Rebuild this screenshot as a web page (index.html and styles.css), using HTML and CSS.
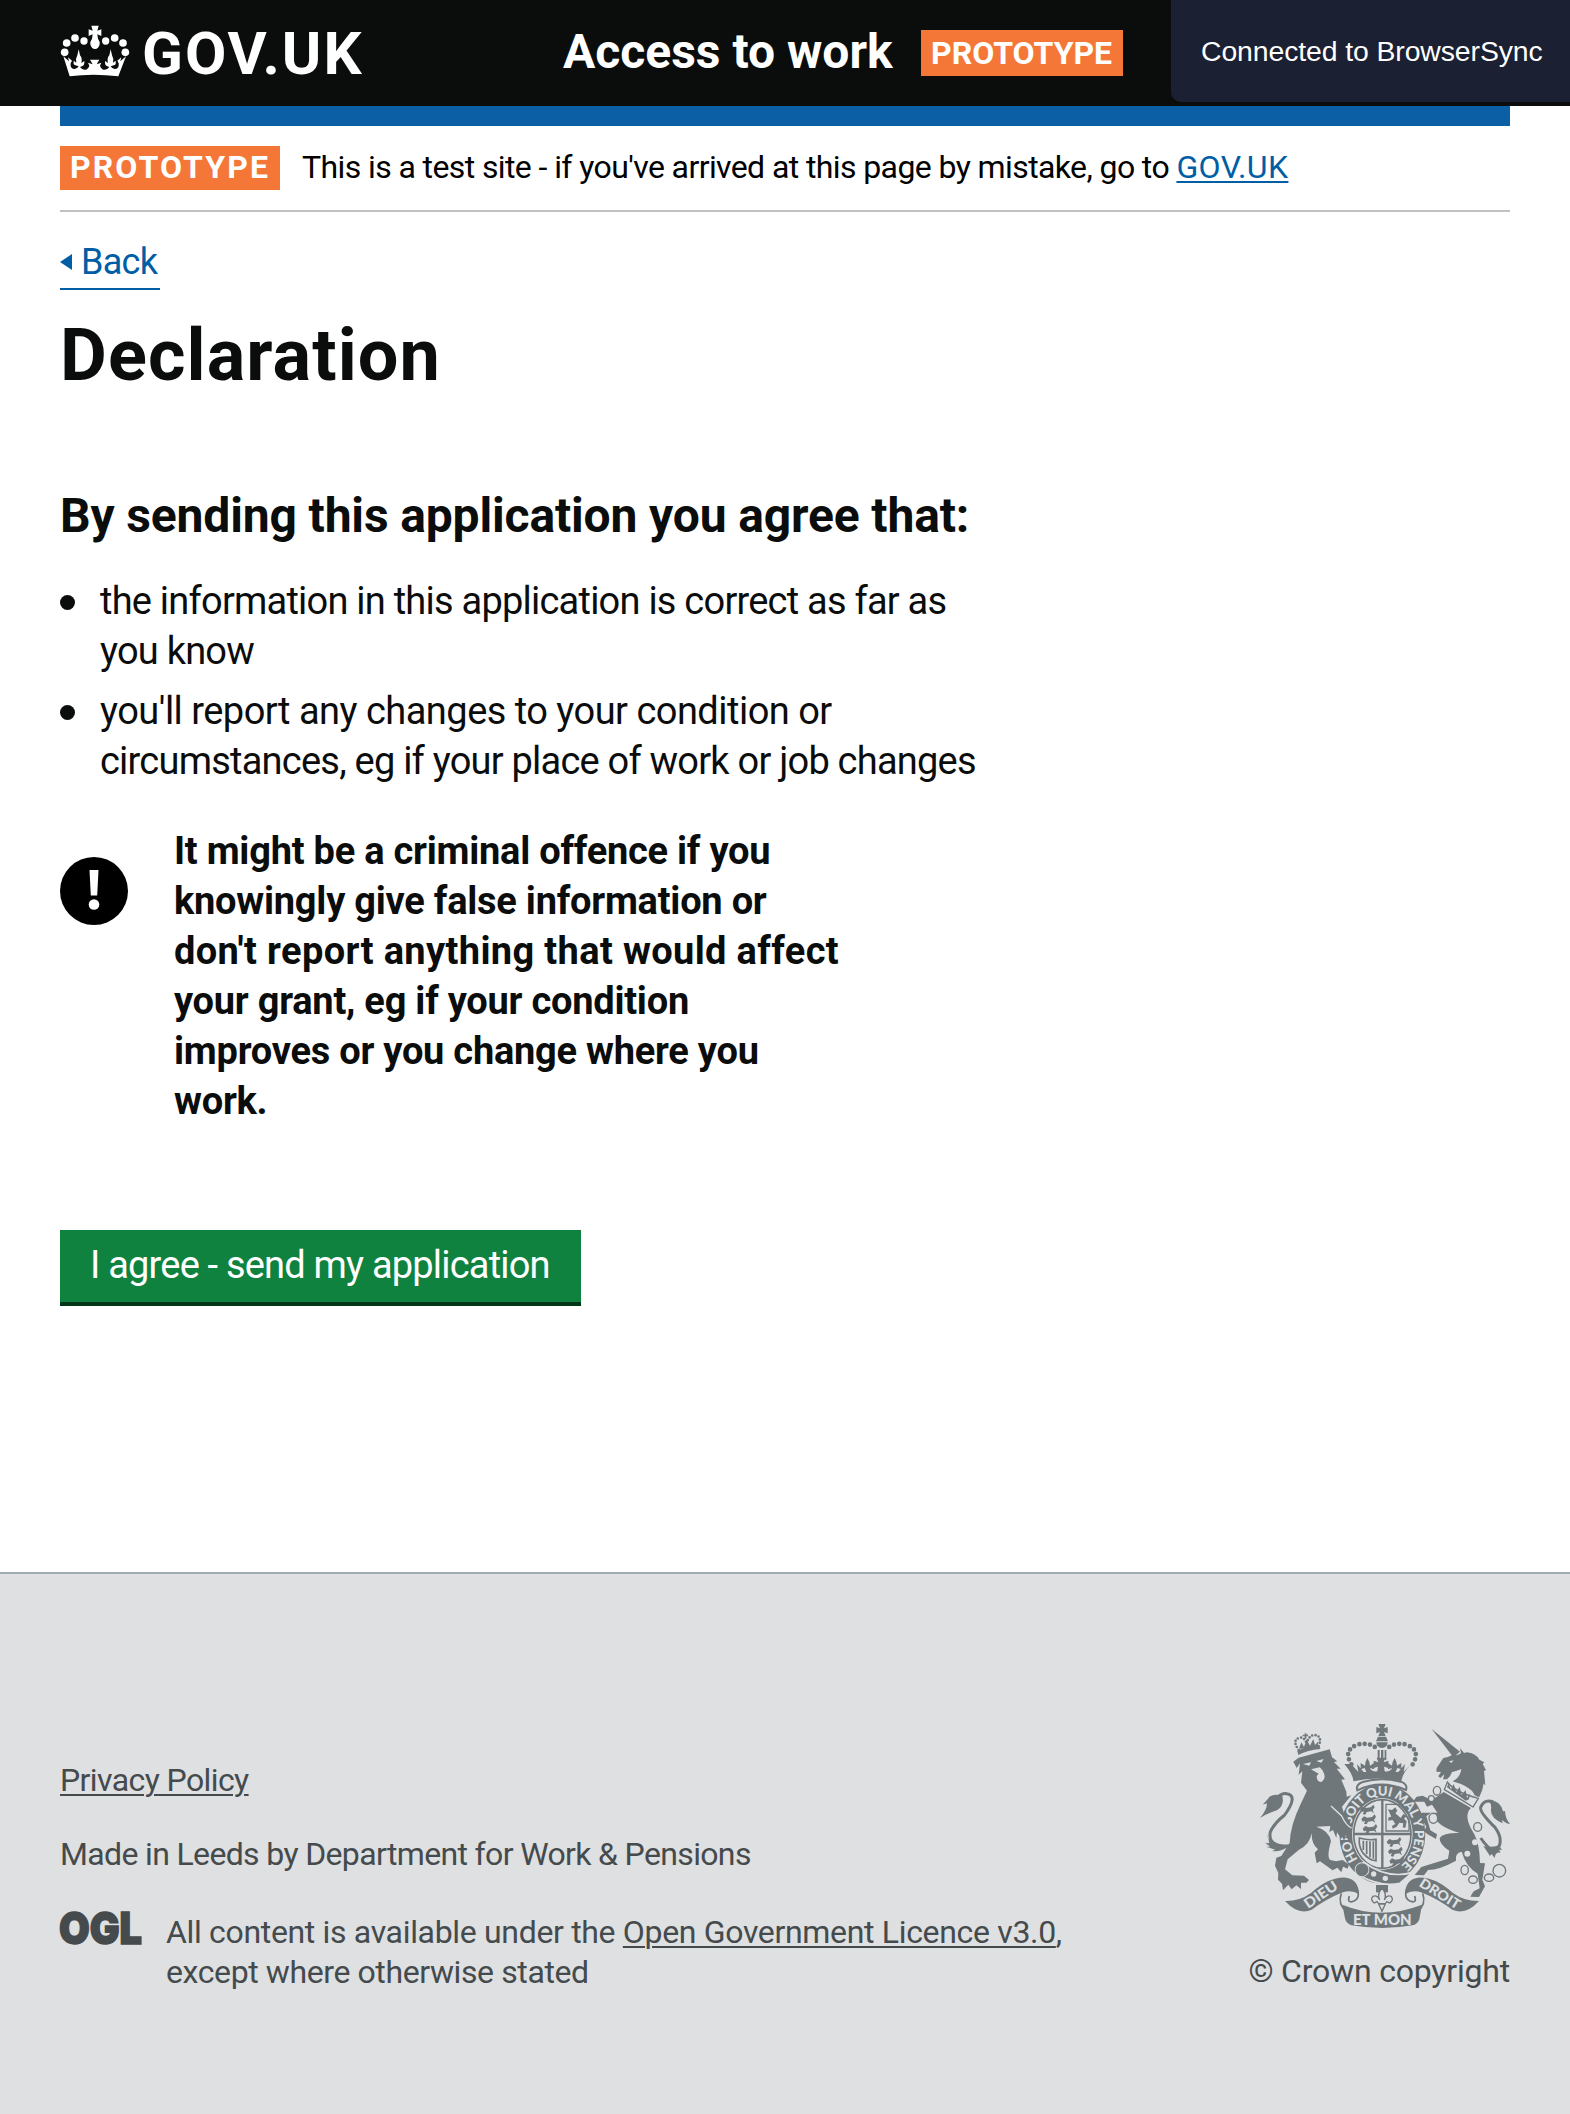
FILE: index.html
```html
<!DOCTYPE html>
<html lang="en">
<head>
<meta charset="utf-8">
<title>Declaration - Access to work</title>
<link rel="stylesheet" href="styles.css">
</head>
<body>
<header class="header">
  <div class="brand">
    <svg class="crown" viewBox="60 76 210 156" aria-hidden="true">
      <g fill="#fff">
        <circle cx="74" cy="158" r="11.5"/><circle cx="80" cy="130" r="11.5"/><circle cx="105" cy="115" r="11.5"/><circle cx="132" cy="124" r="11"/>
        <circle cx="197" cy="124" r="11"/><circle cx="224" cy="115" r="11.5"/><circle cx="249" cy="130" r="11.5"/><circle cx="256" cy="158" r="11.5"/>
        <path d="M154 78h22l-4 15 12-4v20l-12-5 2 13q6 8 5 17-3 14-14 14t-14-14q-1-9 5-17l2-13-12 5V89l12 4z"/>
        <path d="M70 170l17 15-3-12 12 10-4 8q-2 16 10 17 9 1 14-8l-12-4q-5-3-3-13l8 6q-3-12 3-22l4-18 4 18q8 9 4 23l9-6q1 12-5 15l-8 3q6 9 16 8 8-1 12-12l-4-9 14 5-8-14h28l-8 14 14-5-4 9q4 11 12 12 10 1 16-8l-8-3q-6-3-5-15l9 6q-4-14 4-23l4-18 4 18q6 10 3 22l8-6q2 10-3 13l-12 4q5 9 14 8 12-1 10-17l-4-8 12-10-3 12 17-15-23 60q-75-9-146 0z"/>
      </g>
    </svg>
    <span class="brand-name">GOV.UK</span>
  </div>
  <span class="service">Access to work</span>
  <span class="tag tag-header">PROTOTYPE</span>
  <div class="sync">Connected to BrowserSync</div>
</header>
<div class="page">
  <div class="bar"></div>
  <div class="phase"><span class="tag tag-phase">PROTOTYPE</span><span class="phase-text"><span class="phase-lead">This is a test site - if you've arrived at this page by mistake, go to </span><a href="#">GOV.UK</a></span></div>
  <a class="back" href="#"><span class="arrow"></span>Back</a>
  <main>
    <h1>Declaration</h1>
    <h2>By sending this application you agree that:</h2>
    <ul class="list">
      <li><span>the information in this application is correct as far as<br>you know</span></li>
      <li><span><span class="open">you'll report any changes to your condition or</span><br>circumstances, eg if your place of work or job changes</span></li>
    </ul>
    <div class="warning">
      <svg class="warning-icon" viewBox="0 0 68 68" aria-hidden="true"><circle cx="34" cy="34" r="34"/><path d="M29.500 13h9l-1.300 25.500h-6.400z" fill="#fff"/><circle cx="34" cy="47.500" r="5.300" fill="#fff"/></svg>
      <strong>It might be a criminal offence if you<br>knowingly give false information or<br><span class="loose">don't report anything that would affect</span><br>your grant, eg if your condition<br>improves or you change where you<br>work.</strong>
    </div>
    <button class="button" type="button">I agree - send my application</button>
  </main>
</div>
<footer class="footer">
  <div class="footer-meta">
    <a class="privacy" href="#">Privacy Policy</a>
    <p class="made">Made in Leeds by Department for Work &amp; Pensions</p>
    <div class="licence">
      <svg class="ogl" viewBox="0 0 81 34" aria-label="OGL"><text x="-1" y="33" textLength="83" lengthAdjust="spacingAndGlyphs">OGL</text></svg>
      <p><span class="lic-a">All content is available under the <a href="#">Open Government Licence v3.0</a>,</span><br><span class="lic-b">except where otherwise stated</span></p>
    </div>
  </div>
  <div class="copyright">
    <svg class="crest" viewBox="90 72 750 612" aria-hidden="true">
      <defs>
        <path id="garter" d="M457 517A97 115 0 0 1 457 287A97 115 0 0 1 457 517"/>
        <g id="lion"><path d="M0 14l8-8 10 4 14-2 8-8 4 8-6 8 4 10-8-6-14 2-4 8-8-2 4-8-8 2z"/><path d="M-4 4l4-6M34 24l8 4" stroke-width="4"/></g>
        <g id="lions"><use href="#lion" x="2"/><use href="#lion" x="6" y="29"/><use href="#lion" x="10" y="58"/></g>
      </defs>
      <g class="ink">
        <ellipse cx="457" cy="402" rx="129" ry="149"/>
        <ellipse class="paper" cx="457" cy="402" rx="91" ry="108"/>
        <ellipse class="line" cx="457" cy="402" rx="86" ry="103" stroke-width="5"/>
        <path class="line" d="M457 299v206M371 402h172" stroke-width="7"/>
        <use href="#lions" x="388" y="314"/><use href="#lions" x="468" y="411"/>
        <path class="line" d="M468 313h42l27 32v48h-69z" stroke-width="4"/>
        <path d="M474 328l12 2 10-8 6 10-6 8 16 14 8-12 10 6-8 8 8 8-4 20-8-2 2-12-12-2-8 12-12 6-2-8 10-6-8-12-14 2 2-10 8-2z"/>
        <path class="line" d="M388 414q26 8 50 4v64l-12-2q-42-20-38-66zM400 422v28M410 423v40M420 424v48M430 424v52" stroke-width="5"/>
        <text class="motto" font-size="39"><textPath href="#garter" startOffset="86" textLength="520">HONI SOIT QUI MAL Y PENSE</textPath></text>
        <path stroke="#dee0e2" stroke-width="5" d="M401 486q68 52 146 32l-38 32q-54 12-116-21z"/>
        <circle cx="396" cy="509" r="19" stroke="#dee0e2" stroke-width="6"/><circle class="line" cx="396" cy="509" r="17" stroke-width="5"/>
        <circle class="paper" cx="431" cy="522" r="8"/><circle class="paper" cx="466" cy="535" r="8"/>
        <!-- crown above the garter -->
        <path class="paper line" d="M398 246q-22 8-16 25 70-34 146-1 6-18-16-25-60-15-114 1z" stroke-width="6"/>
        <path d="M363 192l22 24-4-24 20 24h8l-5-12-12 4v-19l13 8q0-11 7-23 8 12 8 23l12-8v19l-12-4q4 12 22 10l2-14-13 4v-22l14 5-5-14h26l-5 14 14-5v22l-13-4 2 14q18 2 22-10l-12 4v-19l12 8q0-11 8-23 7 12 7 23l13-8v19l-12-4-5 12h8l20-24-4 24 22-24q-26 28-29 52-67-17-144 0 0-20-27-52z"/>
        <g class="beads"><path d="M364 193Q337 148 386 133Q425 126 444 150M548 193Q575 148 526 133Q487 126 468 150"/></g>
        <path d="M445 72h22l-5 13 11-4v19l-11-4 5 12h-22l5-12-11 4V81l11 4zM444 110h24l6 14h-36zM439 127h34q-1 16-17 17-16-1-17-17zM443 150h6v30h-6zM453 150h7v30h-7zM464 150h5v30h-5z"/>
        <!-- lion -->
        <path d="M190 185l16-12 93-25 7 24 16 12-10 2 20 20-12 0 25 32-11 1 15 36 1 15 14-4-28 34 6 20 18 25 6 50-9 12-9-22-6 18-8-20-5 6-8-12-2 17-10-24-11 6 3-18-42 2q39 12 44 44-14 48-2 56l17 4 20-4 19 14-4 12-14-6-5 17-12-14-14 8-38-27-10 6-6-32 10-10q-20-16-19-49-5 34-38 50l-34 29-8 30 22 18 35 1 15 13-8 8-16 0v19l-14-11-14 12-10-14-16 17-3-20-12-12 1-20-10-22 4-24 15-5 25-40q2-52 33-116l19-40-18-24 4-34-11 10 4-34-10 14z"/>
        <path class="paper" d="M219 192l24-5-5 10zM259 183l22-6-7 11zM243 208l26-6 8 8q15 25-3 36-14 0-14-18l6-7z"/>
        <path class="knock" d="M303 318l32 30q14 30 30 36"/>
        <path class="line" d="M178 438Q112 440 121 396Q132 370 164 345Q206 286 170 281Q155 279 140 294" stroke-width="9"/>
        <path d="M157 288q-30-11-43 8l-16 18 13-4q0 20-22 45 20-14 52-24 23-13 16-43zM112 403q-2 26 62 38-26 16-48 12l10-4-28-9h12l-14-12 12 2z"/>
        <path d="M202 152q30-16 68-12l1 7q-38 3-66 18z"/>
        <path class="beads small" d="M206 150Q184 119 210 113Q222 111 229 128M266 138Q278 108 254 105Q239 105 231 126"/>
        <path d="M207 146l7-19 8 14 8-22 10 18 10-20 5 18 9-10v18zM218 104l6 1 0-5h5l0 4 5-1v6l-5 0 0 7h-5v-7h-6z"/>
        <!-- unicorn -->
        <path d="M605 87l85 68-18 15-9-7z"/>
        <path d="M690 144l12 15 9-2q25 2 37 22l15 8-5 5 10 18-6 3 4 44-5-7q-2 20-13 41-6 0-14-5-10-26-66-42 24-13 26-37-20 8-28 9-4 14-15 22l-12 0 4-15-12 11-6-5 8-13-14-1 1-11 20-30 14-3 17-8 10 3 12-6z"/>
        <path class="paper" d="M657 184l14-3-7 8z"/>
        <path class="paper line" d="M652 246q22 30 93 49l-16 26q-58-36-86-52z" stroke-width="4"/>
        <path d="M651 262l4-12 8 18 8-16 8 24 10-16 6 25 12-15 4 24 10-14-4 18-10 4z"/>
        <path d="M641 276l82 48q-26 22 10 79 16 30 17 86l15 1-8 49 8 20-18 32-26-1 10-16 18-9-6-44q-36-22-48-66-21 4-17 27-51 28-84 28l-12 16-28-1 20-24 80-25 4-24q-30-18-29-38 10-16 60-15-70-18-84-62l-16 12 12 42 20 12-3 14-25-14-11-9 7-14-13-24-17-16 20-2 43 0-16-24-15 6-8-15-35 0 12-15 18-3 27 14z"/>
        <g class="spot"><ellipse cx="621" cy="272" rx="11" ry="13"/><ellipse cx="604" cy="296" rx="9" ry="9"/><ellipse cx="610" cy="355" rx="13" ry="15"/><ellipse cx="743" cy="381" rx="12" ry="13"/><ellipse cx="704" cy="510" rx="11" ry="14"/><ellipse cx="729" cy="539" rx="13" ry="11"/><ellipse cx="777" cy="533" rx="14" ry="11"/><circle cx="808" cy="512" r="19"/></g>
        <circle class="paper" cx="735" cy="427" r="9"/><circle class="paper" cx="712" cy="461" r="9"/>
        <path class="line" d="M752 414Q782 458 801 450Q823 420 795 382Q748 336 752 322Q763 296 790 306" stroke-width="9"/>
        <path d="M775 303q35-6 44 31l6-1q0 22 16 40-16-4-25-13l2 10q-38-16-35-42 3-16-8-25zM760 438q24 6 46-2l10 14-9-1 5 9q-16-3-18 16l-9-12-5 6z"/>
        <!-- ribbons -->
        <path class="line" d="M372 547Q398 590 372 603Q350 612 358 588M540 547Q514 590 540 603Q562 612 554 588M334 580Q322 612 350 636M578 580Q590 612 562 636" stroke-width="5"/>
        <path d="M165 603q44 1 78-24 56-50 106-46 37 6 38 50-22-16-52-5-46 18-90 51-40 18-80-26z"/>
        <path d="M747 603q-44 1-78-24-56-50-106-46-37 6-38 50 22-16 52-5 46 18 90 51 40 18 80-26z"/>
        <path d="M337 614q116 48 239 0l-8 44q-4 14-20 18-90 16-184 0-16-6-19-21z"/>
        <text class="motto" font-size="42" transform="translate(234 627) rotate(-34)" textLength="112" lengthAdjust="spacingAndGlyphs">DIEU</text>
        <text class="motto" font-size="41" transform="translate(565 557) rotate(32)" textLength="136" lengthAdjust="spacingAndGlyphs">DROIT</text>
        <text class="motto" font-size="46" x="369" y="675" textLength="176" lengthAdjust="spacingAndGlyphs">ET MON</text>
        <path d="M438 555h36v22h-36z"/>
        <path class="paper line" d="M456 564q-16 18-7 36-8-16-20-11-10 10 4 20l8-4 5 6h20l5-6 8 4q14-10 4-20-12-5-20 11 9-18-7-36zM446 612h20l-10 22z" stroke-width="4"/>
      </g>
    </svg>
    <a class="crown-link" href="#">© Crown copyright</a>
  </div>
</footer>
</body>
</html>
```
FILE: styles.css
```css
* { box-sizing: border-box; }
body { margin: 0; font-family: Roboto, Arial, sans-serif; color: #0b0c0c; background: #fff; }
h1, h2, p, ul { margin: 0; padding: 0; }
a { color: #005ea5; text-decoration-thickness: 2px; text-underline-offset: 3px; }

.header { position: relative; display: flex; align-items: flex-start; height: 106px; padding-left: 60px; background: #0b0c0c; color: #fff; }
.brand { display: flex; width: 503px; padding-top: 24px; gap: 12px; }
.crown { width: 70px; height: 52px; margin-top: 1px; }
.brand-name { font-size: 60px; line-height: 60px; font-weight: 700; letter-spacing: 2px; }
.service { width: 358px; padding-top: 22px; font-size: 48px; line-height: 60px; font-weight: 700; }
.tag { background: #f47738; color: #fff; font-size: 32px; font-weight: 700; white-space: nowrap; }
.tag-header { width: 202px; height: 46px; margin-top: 30px; padding-left: 10px; line-height: 46px; letter-spacing: 0; }
.sync { position: absolute; top: 0; right: 0; width: 399px; height: 102px; padding: 31px 30px 30px; border-bottom-left-radius: 10px; background: #1b2032; font: 28.4px/40px "Liberation Sans", Arial, sans-serif; letter-spacing: -0.1px; white-space: nowrap; }

.page { width: 1450px; margin: 0 auto; height: 1466px; }
.bar { height: 20px; background: #0b5fa5; }
.phase { display: flex; padding: 20px 0; gap: 22px; border-bottom: 2px solid #bfc1c3; }
.tag-phase { width: 220px; height: 44px; padding-left: 10px; line-height: 42px; letter-spacing: 2.1px; }
.phase-text { font-size: 32px; line-height: 42px; color: #000; white-space: nowrap; }
.phase-lead { letter-spacing: -0.6px; }
.phase-text a { letter-spacing: 0.4px; }
.back { display: flex; align-items: center; width: 100px; height: 50px; margin-top: 28px; padding-bottom: 4px; border-bottom: 2px solid #005ea5; font-size: 36px; line-height: 44px; letter-spacing: -0.7px; text-decoration: none; }
.arrow { width: 12px; height: 16px; margin-right: 9px; background: #005ea5; clip-path: polygon(100% 0, 100% 100%, 0 50%); }
h1 { margin-top: 26px; font-size: 72px; line-height: 80px; letter-spacing: 1.1px; }
h2 { margin-top: 90px; font-size: 48px; line-height: 60px; letter-spacing: -0.15px; }
.list { display: flex; flex-direction: column; gap: 10px; margin-top: 30px; list-style: none; font-size: 38px; line-height: 50px; letter-spacing: -0.77px; }
.list li { display: flex; gap: 25px; }
.list li::before { content: ""; width: 15px; height: 15px; margin-top: 19px; border-radius: 50%; background: #0b0c0c; }
.open { letter-spacing: -0.52px; }
.warning { display: flex; gap: 46px; margin-top: 40px; font-size: 38px; line-height: 50px; letter-spacing: -0.24px; }
.loose { letter-spacing: 0.36px; }
.warning-icon { width: 68px; height: 68px; margin-top: 31px; }
.button { display: block; width: 521px; height: 76px; margin-top: 104px; padding: 0 0 2px 30px; border: 0; border-bottom: 4px solid #003618; background: #10823f; color: #fff; font: 38px/70px Roboto, Arial, sans-serif; letter-spacing: -0.8px; text-align: left; white-space: nowrap; }

.footer { display: flex; justify-content: space-between; height: 542px; padding: 0 60px; border-top: 2px solid #a1acb2; background: #dee0e2; color: #454a4c; font-size: 32px; line-height: 40px; white-space: nowrap; }
.footer a { color: #454a4c; }
.footer-meta { padding-top: 186px; }
.privacy { display: block; letter-spacing: -0.6px; }
.made { margin-top: 34px; letter-spacing: -0.65px; }
.licence { display: flex; gap: 25px; margin-top: 38px; }
.ogl { width: 81px; height: 34px; margin-top: -1px; overflow: visible; }
.ogl text { font: 900 44px Inter, sans-serif; fill: #454a4c; stroke: #454a4c; stroke-width: 1.5px; }
.lic-a { letter-spacing: -0.33px; }
.lic-b { letter-spacing: -0.4px; }
.copyright { display: flex; flex-direction: column; align-items: flex-end; padding-top: 150px; }
.crest { width: 250px; height: 204px; margin-bottom: 23px; }
.footer .crown-link { text-decoration: none; letter-spacing: -0.2px; }
.ink { fill: #6f777b; }
.paper { fill: #dee0e2; }
.line { stroke: #6f777b; }
.line:not(.paper) { fill: none; }
.knock { fill: none; stroke: #dee0e2; stroke-width: 4; }
.beads { fill: none; stroke: #6f777b; stroke-width: 14; stroke-linecap: round; stroke-dasharray: 0 16; }
.small { stroke-width: 8; stroke-dasharray: 0 10; }
.spot { fill: #dee0e2; stroke: #6f777b; stroke-width: 4; }
.motto { fill: #dee0e2; font-family: Lato, sans-serif; font-weight: 900; }
```
